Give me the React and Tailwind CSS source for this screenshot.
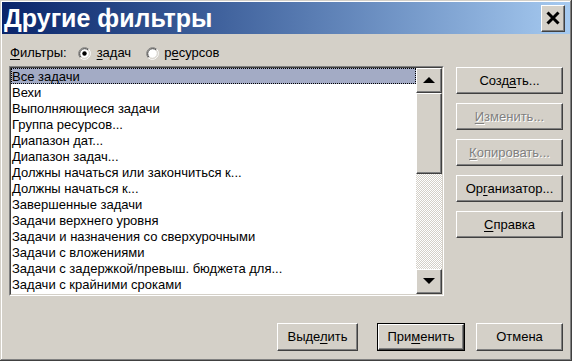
import React from 'react'

const raised =
  'bg-[#d4d0c8] border border-t-white border-l-white border-r-[#404040] border-b-[#404040] shadow-[inset_-1px_-1px_0_#808080]'

const items = [
  'Все задачи',
  'Вехи',
  'Выполняющиеся задачи',
  'Группа ресурсов...',
  'Диапазон дат...',
  'Диапазон задач...',
  'Должны начаться или закончиться к...',
  'Должны начаться к...',
  'Завершенные задачи',
  'Задачи верхнего уровня',
  'Задачи и назначения со сверхурочными',
  'Задачи с вложениями',
  'Задачи с задержкой/превыш. бюджета для...',
  'Задачи с крайними сроками',
]

const Radio = ({ checked }) => (
  <svg width="13" height="13" viewBox="0 0 13 13">
    <circle cx="6.5" cy="6.5" r="5" fill="#ffffff" />
    <path d="M2.26 10.74A6 6 0 0 1 10.74 2.26" fill="none" stroke="#808080" />
    <path d="M10.74 2.26A6 6 0 0 1 2.26 10.74" fill="none" stroke="#ffffff" />
    <path d="M2.97 10.03A5 5 0 0 1 10.03 2.97" fill="none" stroke="#404040" />
    <path d="M10.03 2.97A5 5 0 0 1 2.97 10.03" fill="none" stroke="#d4d0c8" />
    {checked && <circle cx="6.5" cy="6.5" r="2.2" fill="#000" />}
  </svg>
)

const Arrow = ({ down }) => (
  <svg width="12" height="7" viewBox="0 0 12 7">
    <polygon points={down ? '0,0 12,0 6,6' : '6,0 12,6 0,6'} fill="#000" />
  </svg>
)

const Btn = ({ children, disabled, className = '' }) => (
  <div className={`${raised} flex items-center justify-center ${className} ${disabled ? 'text-[#808080] [text-shadow:1px_1px_0_#fff]' : 'text-black'}`}>
    {children}
  </div>
)

const App = () => {
  return (
    <div className="w-[572px] h-[361px] bg-[#d4d0c8] p-[2px] flex flex-col font-['Liberation_Sans',Arial,sans-serif] text-[13px] text-black shadow-[inset_-1px_-1px_0_#404040,inset_1px_1px_0_#d4d0c8,inset_-2px_-2px_0_#808080,inset_2px_2px_0_#ffffff] overflow-hidden">
      <div className="h-[32px] flex items-center bg-gradient-to-r from-[#0a246a] to-[#a6caf0] pl-[2px] pr-[5px]">
        <span className="text-white font-bold text-[25px] leading-none">Другие фильтры</span>
        <div className={`${raised} ml-auto w-[24px] h-[27px] flex items-center justify-center`}>
          <svg width="14" height="14" viewBox="0 0 14 14">
            <path d="M1.5 1.5L12.5 12.5M12.5 1.5L1.5 12.5" stroke="#000" strokeWidth="3" />
          </svg>
        </div>
      </div>

      <div className="flex-1 flex flex-col pt-[7px] px-[7px]">
        <div className="flex gap-[12px]">
          <div className="flex flex-col w-[435px]">
            <div className="h-[24px] flex items-center pl-[1px]">
              <span>
                <u className="underline-offset-2">Ф</u>ильтры:
              </span>
              <span className="ml-[11px] flex">
                <Radio checked />
              </span>
              <span className="ml-[6px]">
                <u className="underline-offset-2">з</u>адач
              </span>
              <span className="ml-[15px] flex">
                <Radio />
              </span>
              <span className="ml-[5px]">
                р<u className="underline-offset-2">е</u>сурсов
              </span>
            </div>
            <div className="mt-[1px] h-[230px] border border-t-[#808080] border-l-[#808080] border-r-white border-b-white">
              <div className="h-full flex bg-white border border-t-[#404040] border-l-[#404040] border-r-[#d4d0c8] border-b-[#d4d0c8]">
                <div className="flex-1 flex flex-col overflow-hidden">
                  {items.map((item, i) => (
                    <div
                      key={item}
                      className={`h-[16px] leading-[17px] pl-[1px] whitespace-nowrap ${i === 0 ? 'bg-[#a3abc5] outline outline-1 outline-dotted outline-black -outline-offset-1' : ''}`}
                    >
                      {item}
                    </div>
                  ))}
                </div>
                <div className="w-[26px] flex flex-col">
                  <div className={`${raised} h-[25px] flex items-center justify-center`}>
                    <Arrow />
                  </div>
                  <div className={`${raised} h-[81px]`} />
                  <div className="flex-1 bg-[image:repeating-conic-gradient(#d4d0c8_0%_25%,#ffffff_0%_50%)] bg-[length:2px_2px]" />
                  <div className={`${raised} h-[25px] flex items-center justify-center`}>
                    <Arrow down />
                  </div>
                </div>
              </div>
            </div>
          </div>

          <div className="flex flex-col gap-[9px] pt-[26px] w-[107px]">
            <Btn className="h-[27px]">
              <span>
                Созд<u className="underline-offset-2">а</u>ть...
              </span>
            </Btn>
            <Btn className="h-[27px]" disabled>
              <span>
                <u className="underline-offset-2">И</u>зменить...
              </span>
            </Btn>
            <Btn className="h-[27px]" disabled>
              <span>
                <u className="underline-offset-2">К</u>опировать...
              </span>
            </Btn>
            <Btn className="h-[27px]">
              <span>
                Ор<u className="underline-offset-2">г</u>анизатор...
              </span>
            </Btn>
            <Btn className="h-[27px]">
              <span>
                <u className="underline-offset-2">С</u>правка
              </span>
            </Btn>
          </div>
        </div>

        <div className="mt-auto mb-[8px] flex justify-end items-center">
          <Btn className="w-[81px] h-[28px]">
            <span>
              Выде<u className="underline-offset-2">л</u>ить
            </span>
          </Btn>
          <div className="ml-[19px] w-[88px] h-[28px] border border-black">
            <Btn className="h-full">
              <span>
                При<u className="underline-offset-2">м</u>енить
              </span>
            </Btn>
          </div>
          <Btn className="ml-[11px] w-[87px] h-[28px]">Отмена</Btn>
        </div>
      </div>
    </div>
  )
}

export default App
